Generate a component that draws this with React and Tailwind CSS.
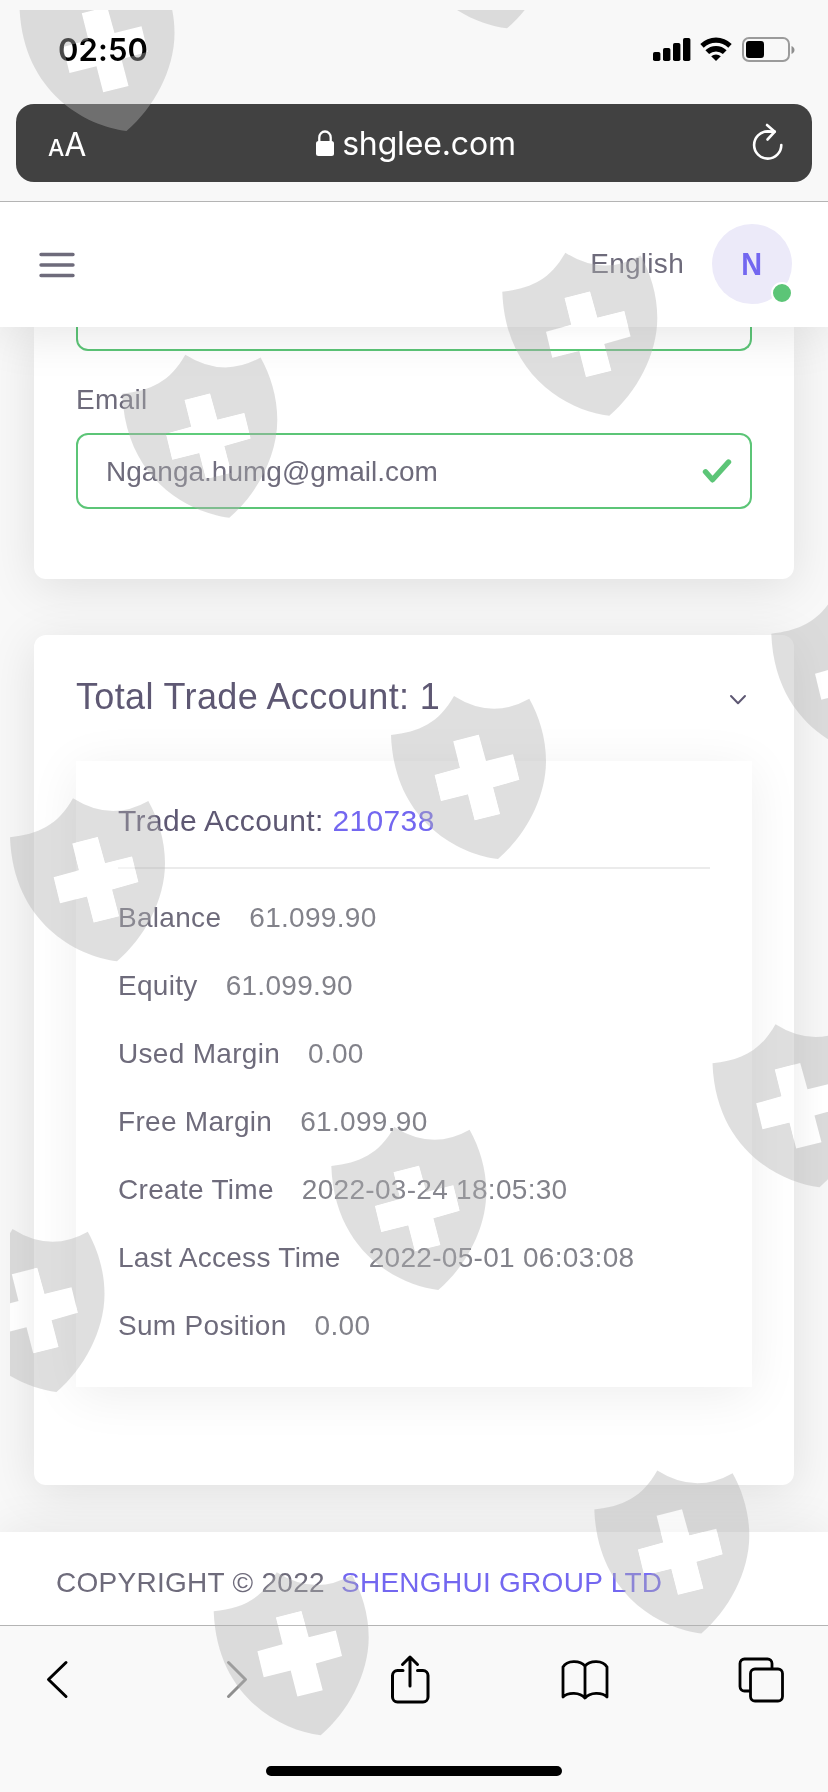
import React from 'react';

const accountRows = [
  { label: 'Balance', value: '61.099.90' },
  { label: 'Equity', value: '61.099.90' },
  { label: 'Used Margin', value: '0.00' },
  { label: 'Free Margin', value: '61.099.90' },
  { label: 'Create Time', value: '2022-03-24 18:05:30' },
  { label: 'Last Access Time', value: '2022-05-01 06:03:08' },
  { label: 'Sum Position', value: '0.00' },
];

const shields = [
  [19.5, -32], [400, -134.7], [502.3, 252.7], [122.3, 354.7], [771.3, 594.7], [391, 696],
  [10, 798.3], [712.5, 1024.3], [331.3, 1127], [-50.5, 1229], [594.3, 1470.5], [213.7, 1572.3],
];

const CROSS = 'M62.3 45.3L87.7 38.7L95 65L122 58.3L128.3 83.7L102 91.3L109 118L83.7 124.3L77 98.3L50 105L43.7 79L69 72Z';
const SHIELD = 'M0 39C28 36 48 27 63 0Q101 24 138.3 2.7C148 20 155 42 155 65C155 102 134 140 107 163C66 158 3 124 0 39Z';

function StatusBar() {
  return (
    <div className="flex h-[104px] items-start justify-between pl-[58px] pr-[33px] font-[Inter,sans-serif]">
      <span className="mt-[30px] text-[31px] leading-[40px] font-semibold tracking-[0.1px] text-black">02:50</span>
      <div className="mt-[37px] flex items-start">
        <svg width="38" height="24" viewBox="0 0 38 24">
          <rect x="0" y="15" width="7.4" height="9" rx="1.8" />
          <rect x="10" y="11" width="7.4" height="13" rx="1.8" />
          <rect x="20" y="6" width="7.4" height="18" rx="1.8" />
          <rect x="30" y="1" width="7.4" height="23" rx="1.8" />
        </svg>
        <svg className="ml-[9px]" width="32" height="24" viewBox="0 0 32 24">
          <path d="M0.3 7a22.4 22.4 0 0 1 31.4 0l-3.4 3.7a17.8 17.8 0 0 0-24.6 0z" />
          <path d="M5.4 13.2a15.4 15.4 0 0 1 21.2 0l-3.7 3.9a10.1 10.1 0 0 0-13.8 0z" />
          <path d="M11.2 19.2a7.3 7.3 0 0 1 9.6 0L16 24z" />
        </svg>
        <svg className="ml-[10px]" width="53" height="26" viewBox="0 0 53 26">
          <rect x="1" y="1" width="46" height="23" rx="6" fill="none" stroke="#9b9b9b" strokeWidth="2" />
          <rect x="4" y="4" width="18" height="17" rx="3" />
          <path d="M49.5 9c4 1.4 4 6.6 0 8z" fill="#8f8f8f" />
        </svg>
      </div>
    </div>
  );
}

function AddressBar() {
  return (
    <div className="mx-4 flex h-[78px] items-center justify-between rounded-[18px] bg-[#414141] pl-8 pr-[28px] font-[Inter,sans-serif] tracking-normal text-white">
      <div className="flex w-[60px] items-baseline pt-1">
        <span className="text-[23px] font-medium">A</span>
        <span className="text-[32px]">A</span>
      </div>
      <div className="flex items-center">
        <svg className="mr-2" width="18" height="26" viewBox="0 0 18 26">
          <rect x="0" y="11" width="18" height="15" rx="2.5" fill="#fff" />
          <path d="M3.3 12V7.5a5.7 6 0 0 1 11.4 0V12" fill="none" stroke="#fff" strokeWidth="2.3" />
        </svg>
        <span className="pt-[2px] text-[32px] leading-[40px] tracking-[-0.15px]">shglee.com</span>
      </div>
      <div className="flex w-[60px] justify-end">
        <svg className="-mt-[2px]" width="32" height="38" viewBox="0 0 32 38" fill="none" stroke="#fff" strokeWidth="2.6" strokeLinecap="round" strokeLinejoin="round">
          <path d="M29.3 22A13.6 13.6 0 1 1 15.7 8.4L22.5 8.6" />
          <path d="M15 2L22.8 8.7L15.5 16.5" />
        </svg>
      </div>
    </div>
  );
}

function Navbar() {
  return (
    <div className="flex h-[125px] items-center justify-between bg-white pl-[39px] pr-9 text-[28px] text-[#6e6b7b] shadow-[0_8px_48px_rgba(0,0,0,0.1)]">
      <svg width="36" height="26" viewBox="0 0 36 26" stroke="#6e6b7b" strokeWidth="3.4" strokeLinecap="round">
        <path d="M2 2.5H34M2 13H34M2 23.5H34" />
      </svg>
      <div className="flex items-center pb-[2px]">
        <span className="mr-7">English</span>
        <div className="relative flex size-20 items-center justify-center rounded-full bg-[#eceaf9] text-[32px] font-bold text-[#7367f0]">
          <span className="scale-x-90">N</span>
          <span className="absolute -right-px bottom-0 size-[22px] rounded-full border-2 border-white bg-[#5cc577]" />
        </div>
      </div>
    </div>
  );
}

function EmailCard() {
  return (
    <div className="mx-[34px] h-[252px] rounded-b-xl bg-white px-[42px] shadow-[0_8px_48px_rgba(0,0,0,0.1)]">
      <div className="h-6 rounded-b-xl border-2 border-t-0 border-[#5cc577]" />
      <div className="mt-7 leading-[42px]">Email</div>
      <div className="mt-3 flex h-[76px] items-center justify-between rounded-xl border-2 border-[#5cc577] pl-7 pr-[18px]">
        <span className="pt-px tracking-normal">Nganga.humg@gmail.com</span>
        <svg width="30" height="26" viewBox="0 0 30 26" fill="none" stroke="#5cc577" strokeWidth="5.4" strokeLinecap="round" strokeLinejoin="round">
          <path d="M3.5 13.8L10.5 21.8L26.5 4" />
        </svg>
      </div>
    </div>
  );
}

function AccountCard() {
  return (
    <div className="mx-[34px] mt-14 h-[850px] rounded-xl bg-white px-[42px] pt-10 shadow-[0_8px_48px_rgba(0,0,0,0.1)]">
      <div className="flex items-center justify-between pr-[5px] text-[#5e5873]">
        <h4 className="text-[36px] leading-[44px] tracking-[0.36px]">Total Trade Account: 1</h4>
        <svg className="mt-[6px]" width="18" height="12" viewBox="0 0 18 12" fill="none" stroke="#5e5873" strokeWidth="2" strokeLinecap="round" strokeLinejoin="round">
          <path d="M2 2L9 9.3L16 2" />
        </svg>
      </div>
      <div className="mt-[42px] h-[626px] bg-white px-[42px] pt-[42px] shadow-[0_8px_48px_rgba(0,0,0,0.07)]">
        <h5 className="text-[30px] leading-[36px] tracking-[0.36px] text-[#5e5873]">
          Trade Account: <span className="text-[#7367f0]">210738</span>
        </h5>
        <div className="my-7 h-[2px] bg-[#ebebeb]" />
        <div className="flex flex-col gap-[26px] tracking-[0.3px]">
          {accountRows.map((row) => (
            <div key={row.label} className="flex leading-[42px]">
              <span>{row.label}</span>
              <span className="ml-7 text-[#82828a]">{row.value}</span>
            </div>
          ))}
        </div>
      </div>
    </div>
  );
}

function Toolbar() {
  return (
    <div className="relative flex h-[167px] flex-col items-center justify-between border-t border-[#b4b4b4] bg-[#f9f9f9] pb-4">
      <div className="mt-7 flex w-full items-center pl-[45px]">
        <svg width="24" height="40" viewBox="0 0 24 40" fill="none" stroke="#000" strokeWidth="3" strokeLinecap="round" strokeLinejoin="round">
          <path d="M21 3.5L3.5 20.5L21 37.5" />
        </svg>
        <svg className="ml-[156px]" width="24" height="40" viewBox="0 0 24 40" fill="none" stroke="#8f8f8f" strokeWidth="3" strokeLinecap="round" strokeLinejoin="round">
          <path d="M3.5 3.5L20.5 20.5L3.5 37.5" />
        </svg>
        <svg className="ml-[141px]" width="40" height="50" viewBox="0 0 40 50" fill="none" stroke="#000" strokeWidth="3" strokeLinecap="round" strokeLinejoin="round">
          <path d="M13 16.5H7.5a5 5 0 0 0-5 5V43a5 5 0 0 0 5 5H33a5 5 0 0 0 5-5V21.5a5 5 0 0 0-5-5H27.5" />
          <path d="M20 32V3M12.5 10.5L20 3L27.5 10.5" />
        </svg>
        <svg className="mt-[2px] ml-[130px]" width="50" height="42" viewBox="0 0 50 42" fill="none" stroke="#000" strokeWidth="2.8" strokeLinecap="round" strokeLinejoin="round">
          <path d="M25 7C20 1 7 1 3 8V38C8 33 20 33 25 39C30 33 42 33 47 38V8C43 1 30 1 25 7V38" />
        </svg>
        <svg className="mt-px ml-32" width="46" height="46" viewBox="0 0 46 46" fill="none" stroke="#000" strokeWidth="2.8" strokeLinejoin="round">
          <path d="M12 34H6.5a4.5 4.5 0 0 1-4.5-4.5V6.5A4.5 4.5 0 0 1 6.5 2H29.5A4.5 4.5 0 0 1 34 6.5V12" />
          <rect x="12.5" y="12" width="32" height="32" rx="4.5" />
        </svg>
      </div>
      <div className="h-[10px] w-[296px] rounded-full bg-black" />
    </div>
  );
}

// Repeating shield pattern drawn over the whole page
function ShieldOverlay() {
  return (
    <>
      <svg className="pointer-events-none absolute top-[10px] left-[10px] z-20" width="818" height="1782" viewBox="10 10 818 1782">
        {shields.map(([x, y]) => (
          <path key={`${x}-${y}`} transform={`translate(${x} ${y})`} d={SHIELD + CROSS} fillRule="evenodd" fill="#b1b1b1" fillOpacity="0.41" />
        ))}
      </svg>
      <svg className="pointer-events-none absolute top-[10px] left-[10px] z-20 mix-blend-color-dodge" width="818" height="1782" viewBox="10 10 818 1782">
        {shields.map(([x, y]) => (
          <path key={`${x}-${y}`} transform={`translate(${x} ${y})`} d={CROSS} fill="#090909" />
        ))}
      </svg>
    </>
  );
}

export default function App() {
  return (
    <div className="relative h-[1792px] w-[828px] overflow-hidden bg-[#f8f8f8] font-['Liberation_Sans',Arial,sans-serif] text-[28px] tracking-[0.28px] text-[#6e6b7b]">
      <div className="relative z-10">
        <div className="relative z-10 h-[202px] border-b border-[#b4b4b4] bg-[#f8f8f8]">
          <StatusBar />
          <AddressBar />
        </div>
        <Navbar />
      </div>
      <EmailCard />
      <AccountCard />
      <div className="mt-[47px] flex h-[93px] items-center bg-white pl-14 pt-2 shadow-[0_-8px_40px_rgba(0,0,0,0.06)]">
        <span>COPYRIGHT © 2022</span>
        <span className="ml-4 text-[#7367f0]">SHENGHUI GROUP LTD</span>
      </div>
      <Toolbar />
      <ShieldOverlay />
    </div>
  );
}
